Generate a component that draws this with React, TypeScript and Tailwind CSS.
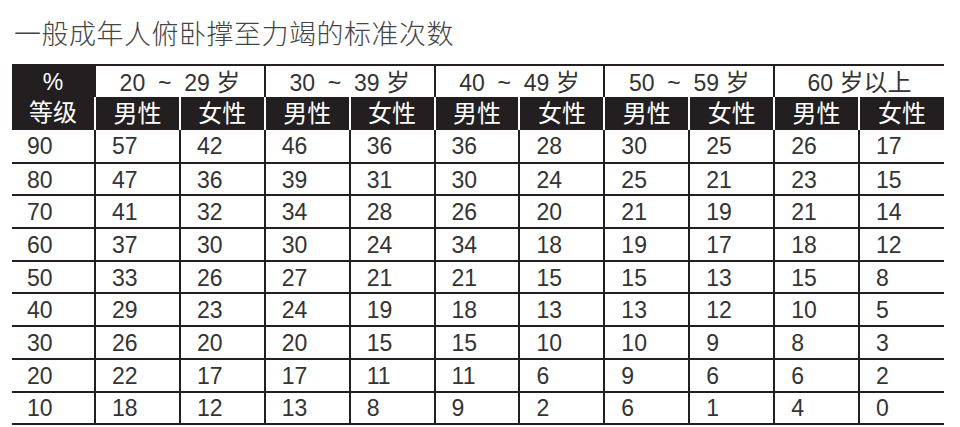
const ages = [
  { n: '20  ~  29 ', c: '岁' },
  { n: '30  ~  39 ', c: '岁' },
  { n: '40  ~  49 ', c: '岁' },
  { n: '50  ~  59 ', c: '岁' },
  { n: '60 ', c: '岁以上' },
]

const rows = [
  [90, 57, 42, 46, 36, 36, 28, 30, 25, 26, 17],
  [80, 47, 36, 39, 31, 30, 24, 25, 21, 23, 15],
  [70, 41, 32, 34, 28, 26, 20, 21, 19, 21, 14],
  [60, 37, 30, 30, 24, 34, 18, 19, 17, 18, 12],
  [50, 33, 26, 27, 21, 21, 15, 15, 13, 15, 8],
  [40, 29, 23, 24, 19, 18, 13, 13, 12, 10, 5],
  [30, 26, 20, 20, 15, 15, 10, 10, 9, 8, 3],
  [20, 22, 17, 17, 11, 11, 6, 9, 6, 6, 2],
  [10, 18, 12, 13, 8, 9, 2, 6, 1, 4, 0],
]

export default function App() {
  return (
    <div className="h-[427px] w-[960px] overflow-hidden bg-white font-['Liberation_Sans','Noto_Sans_CJK_SC',sans-serif] text-[#333]">
      <h1 className="pl-[14px] pt-[17px] font-['Noto_Sans_CJK_SC',sans-serif] text-[27px] font-light leading-[32px] tracking-[0.5px] text-[#444]">
        一般成年人俯卧撑至力竭的标准次数
      </h1>
      <table className="ml-[12px] mt-[15px] w-[932px] table-fixed border-collapse text-[23px] leading-none">
        <colgroup>
          <col className="w-[83px]" />
          {Array.from({ length: 10 }).map((_, i) => (
            <col key={i} />
          ))}
        </colgroup>
        <thead>
          <tr className="h-[32px] border-t-2 border-[#231f20]">
            <td
              rowSpan={2}
              className="bg-[#231f20] text-center align-middle text-white"
            >
              <div className="leading-[30px]">%</div>
              <div className="text-[24px] leading-[32px]">等级</div>
            </td>
            {ages.map((a) => (
              <td
                key={a.n}
                colSpan={2}
                className="border-l-2 border-[#231f20] pt-[2px] text-center whitespace-pre"
              >
                {a.n}
                <span className="text-[24px]">{a.c}</span>
              </td>
            ))}
          </tr>
          <tr className="h-[33px] bg-[#231f20] text-[24px] text-white">
            {ages.map((a) => (
              <>
                <td key={a.n + 'm'} className="border-l-2 border-white text-center">男性</td>
                <td key={a.n + 'f'} className="border-l-2 border-white text-center">女性</td>
              </>
            ))}
          </tr>
        </thead>
        <tbody>
          {rows.map((r) => (
            <tr key={r[0]} className="h-[32.7px] border-b-2 border-[#231f20]">
              {r.map((v, i) => (
                <td
                  key={i}
                  className={
                    i === 0
                      ? 'pl-[15px] pt-[2px]'
                      : 'border-l-2 border-[#231f20] pl-[16px] pt-[2px]'
                  }
                >
                  {v}
                </td>
              ))}
            </tr>
          ))}
        </tbody>
      </table>
    </div>
  )
}
